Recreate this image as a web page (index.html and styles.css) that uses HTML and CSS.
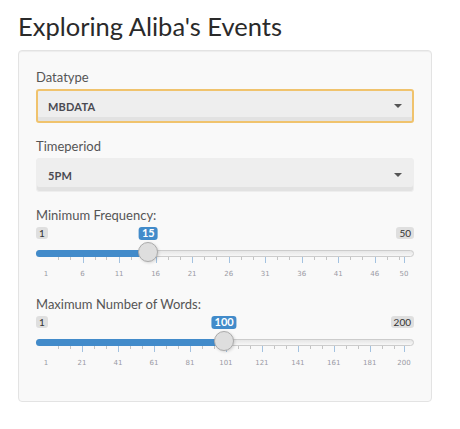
FILE: index.html
```html
<!DOCTYPE html>
<html>
<head>
<meta charset="utf-8">
<link rel="stylesheet" href="styles.css">
</head>
<body>
<div class="page">
  <h2 class="title">Exploring Aliba's Events</h2>
  <div class="well">
    <div class="group">
      <label class="lbl">Datatype</label>
      <div class="select focus"><span class="val">MBDATA</span><span class="caret"></span></div>
    </div>
    <div class="group">
      <label class="lbl">Timeperiod</label>
      <div class="select"><span class="val">5PM</span><span class="caret"></span></div>
    </div>
    <div class="group">
      <label class="lbl">Minimum Frequency:</label>
      <div class="irs" id="s1"></div>
    </div>
    <div class="group">
      <label class="lbl">Maximum Number of Words:</label>
      <div class="irs" id="s2"></div>
    </div>
  </div>
</div>
<script src="slider.js"></script>
</body>
</html>
```

FILE: slider.js
```js
function build(el, min, max, val, labels) {
  var W = 358, off = 10;
  function px(v) { return off + W * (v - min) / (max - min); }
  var h = '';
  h += '<span class="irs-min">' + min + '</span>';
  h += '<span class="irs-max">' + max + '</span>';
  h += '<span class="irs-line"></span>';
  var hp = px(val);
  h += '<span class="irs-bar" style="width:' + hp + 'px"></span>';
  var step = W / 30;
  for (var i = 0; i < labels.length; i++) {
    var x = px(labels[i]);
    if (i > 0) h += '<span class="pol big" style="left:' + x.toFixed(1) + 'px"></span>';
    h += '<span class="gtext" style="left:' + x.toFixed(1) + 'px">' + labels[i] + '</span>';
    if (i < labels.length - 1) {
      h += '<span class="pol" style="left:' + (x + step).toFixed(1) + 'px"></span>';
      h += '<span class="pol" style="left:' + (x + 2 * step).toFixed(1) + 'px"></span>';
    }
  }
  h += '<span class="irs-single" style="left:' + hp.toFixed(1) + 'px">' + val + '</span>';
  h += '<span class="irs-handle" style="left:' + hp.toFixed(1) + 'px"></span>';
  document.getElementById(el).innerHTML = h;
}
build('s1', 1, 50, 15, [1, 6, 11, 16, 21, 26, 31, 36, 41, 46, 50]);
build('s2', 1, 200, 100, [1, 21, 41, 61, 81, 101, 121, 141, 161, 181, 200]);
```

FILE: styles.css
```css
html, body { margin: 0; padding: 0; background: #fff; }
body { font-family: Lato, "Open Sans", sans-serif; color: #555; }
.page { padding: 0 0 0 18px; width: 414px; }
.title {
  margin: 12px 0 10px 0;
  font-size: 25.5px;
  line-height: 1.1;
  font-weight: 400;
  color: #2a2a2a;
}
.well {
  background: #f9f9f9;
  border: 1px solid #e3e3e3;
  border-radius: 4px;
  box-shadow: inset 0 1px 1px rgba(0,0,0,0.05);
  padding: 16px 17px 18px 17px;
}
.group { margin-bottom: 13px; }
.lbl {
  display: block;
  font-size: 13px;
  line-height: 20px;
  margin-bottom: 2px;
  color: #555;
}
.select {
  position: relative;
  height: 34px;
  box-sizing: border-box;
  border: 1px solid #eee;
  border-radius: 3px;
  background: #eee;
  box-shadow: inset 0 -4px 0 #e2e2e2;
  display: flex;
  align-items: center;
  padding-left: 11px;
}
.select.focus {
  border: 2px solid #f0c36d;
  padding-left: 10px;
  box-shadow: inset 0 -4px 0 #e2e2e2;
}
.val {
  font-size: 11px;
  font-weight: 700;
  color: #4a4a52;
  letter-spacing: 0.2px;
}
.caret {
  position: absolute;
  right: 11px;
  top: 14px;
  width: 0; height: 0;
  border-left: 4px solid transparent;
  border-right: 4px solid transparent;
  border-top: 4px solid #555;
}
.focus .caret { right: 10px; top: 13px; }
.irs { position: relative; height: 54px; margin-top: 1px; }
.irs span { position: absolute; display: block; }
.irs-min, .irs-max {
  top: 0;
  font-size: 10px;
  line-height: 10px;
  padding: 1px 3px;
  background: rgba(0,0,0,0.1);
  border-radius: 3px;
  color: #333;
}
.irs-min { left: 0; }
.irs-max { right: 0; }
.irs-line {
  top: 23px; left: 0; right: 0;
  height: 7px;
  box-sizing: border-box;
  border: 1px solid #ccc;
  border-radius: 8px;
  background: linear-gradient(to bottom, #dedede -50%, #fff 150%);
}
.irs-bar {
  top: 23px; left: 0;
  height: 7px;
  background: #428bca;
  border-radius: 8px 0 0 8px;
}
.irs-handle {
  top: 15px;
  width: 20px; height: 20px;
  margin-left: -10px;
  box-sizing: border-box;
  border: 1px solid #ababab;
  background: #dedede;
  border-radius: 50%;
  box-shadow: 1px 1px 3px rgba(0,0,0,0.15);
}
.irs-single {
  top: 0;
  transform: translateX(-50%);
  font-size: 11px;
  line-height: 10px;
  padding: 1px 3px 2px;
  background: #428bca;
  border-radius: 3px;
  color: #fff;
  font-weight: 700;
}
.pol {
  top: 30px;
  width: 1px;
  height: 3px;
  background: #c4c4c4;
}
.pol.big { height: 6px; background: #a3c2e0; }
.gtext {
  top: 43px;
  transform: translateX(-50%);
  font-family: "DejaVu Sans", sans-serif;
  font-size: 7px;
  line-height: 8px;
  color: #9a9aa4;
}
```
